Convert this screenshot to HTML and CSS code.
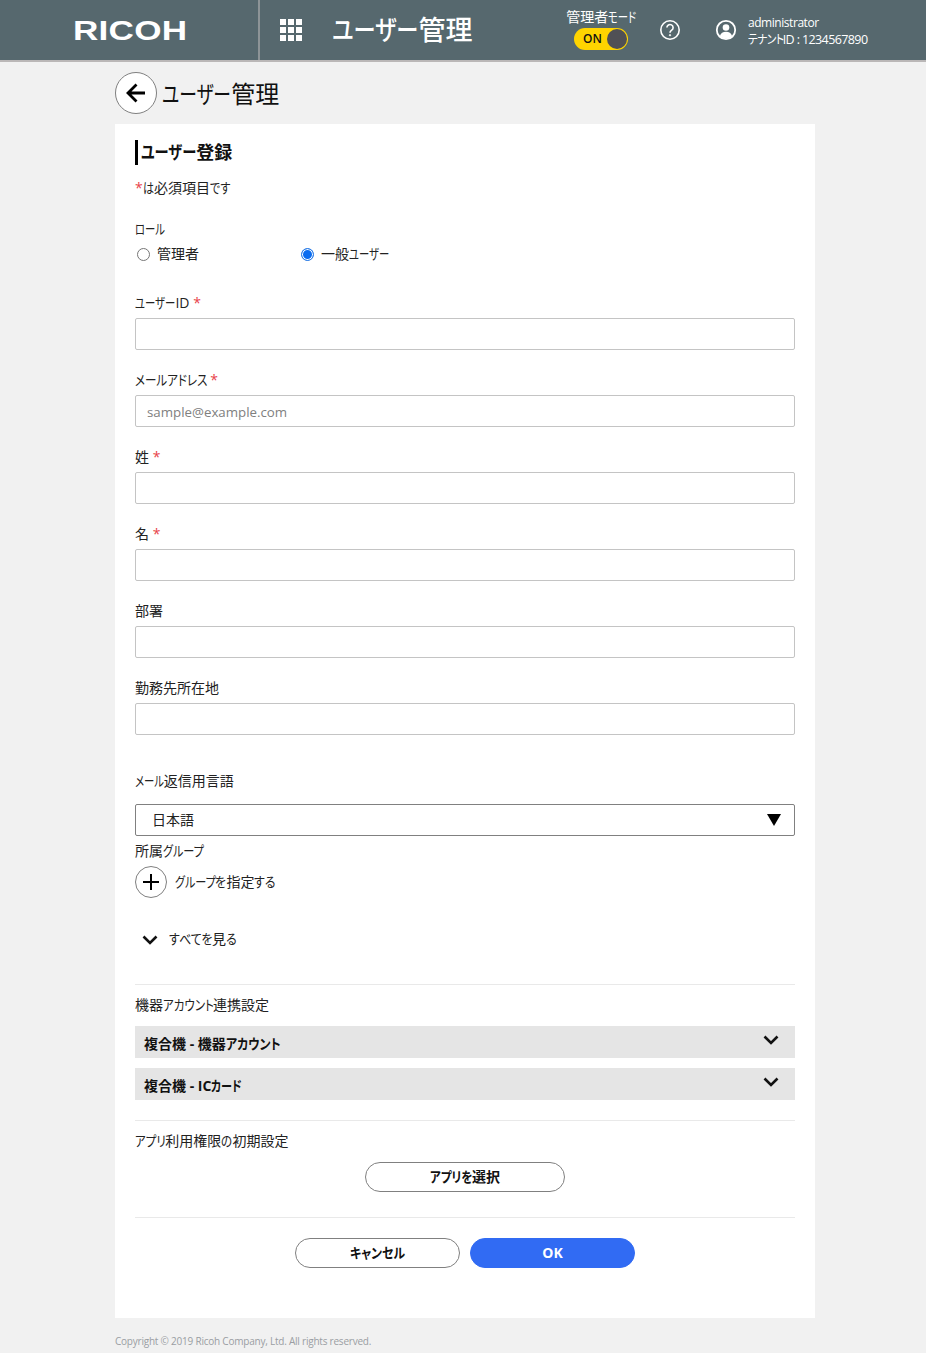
FILE: index.html
```html
<!DOCTYPE html>
<html lang="ja">
<head>
<meta charset="utf-8">
<title>ユーザー管理</title>
<link rel="stylesheet" href="styles.css">
</head>
<body>
<header class="topbar">
  <div class="brand"><span class="logo">RICOH</span></div>
  <div class="appnav">
    <svg class="grid-icon" width="22" height="22" viewBox="0 0 22 22" fill="#fff"><rect width="6" height="6"/><rect x="8" width="6" height="6"/><rect x="16" width="6" height="6"/><rect y="8" width="6" height="6"/><rect x="8" y="8" width="6" height="6"/><rect x="16" y="8" width="6" height="6"/><rect y="16" width="6" height="6"/><rect x="8" y="16" width="6" height="6"/><rect x="16" y="16" width="6" height="6"/></svg>
    <span class="app-title"><span class="sq k n4">ユーザー</span>管理</span>
  </div>
  <div class="mode">
    <span class="mode-label">管理者<span class="sq kk n3">モード</span></span>
    <span class="toggle"><span class="toggle-text">ON</span><span class="knob"></span></span>
  </div>
  <svg class="help" width="22" height="22" viewBox="0 0 22 22" fill="none" stroke="#fff" stroke-width="1.6"><circle cx="11" cy="11" r="9.2"/><path d="M7.9 8.6a3.1 3.1 0 1 1 4.8 2.6c-1 .7-1.7 1.200-1.700 2.500"/><circle cx="11" cy="16.200" r=".7" fill="#fff" stroke-width=".8"/></svg>
  <svg class="user" width="22" height="22" viewBox="0 0 22 22"><circle cx="11" cy="11" r="9.200" fill="none" stroke="#fff" stroke-width="1.800"/><circle cx="11" cy="8.500" r="3.300" fill="#fff"/><path d="M4.800 17.200c.8-3 3.300-4.400 6.200-4.400s5.400 1.400 6.200 4.400a9 9 0 0 1-12.400 0z" fill="#fff"/></svg>
  <div class="account">
    <span class="account-name">administrator</span>
    <span class="account-id"><span class="sq kh n4">テナント</span>ID : 1234567890</span>
  </div>
</header>

<div class="page">
  <div class="page-head">
    <button class="back" type="button" aria-label="戻る">
      <svg width="22" height="22" viewBox="0 0 22 22" fill="none" stroke="#000" stroke-width="2.800"><path d="M20 11H3M11.500 2.500 3 11l8.500 8.500"/></svg>
    </button>
    <h1 class="page-title"><span class="sq kk n4">ユーザー</span>管理</h1>
  </div>

  <main class="card">
    <h2 class="section-title"><span class="sq km n4">ユーザー</span>登録</h2>
    <p class="note"><span class="req">*</span><span class="sq km n1">は</span>必須項目<span class="sq km n2">です</span></p>

    <div class="label role-label"><span class="sq kk n3">ロール</span></div>
    <div class="radios">
      <label class="radio"><span class="radio-mark"></span>管理者</label>
      <label class="radio"><span class="radio-mark on"></span><span>一般<span class="sq kk n4">ユーザー</span></span></label>
    </div>

    <div class="field first">
      <div class="label"><span class="sq kk n4">ユーザー</span>ID <span class="req">*</span></div>
      <div class="input"></div>
    </div>
    <div class="field">
      <div class="label"><span class="sq k n7">メールアドレス</span> <span class="req">*</span></div>
      <div class="input placeholder">sample@example.com</div>
    </div>
    <div class="field">
      <div class="label">姓 <span class="req">*</span></div>
      <div class="input"></div>
    </div>
    <div class="field">
      <div class="label">名 <span class="req">*</span></div>
      <div class="input"></div>
    </div>
    <div class="field">
      <div class="label">部署</div>
      <div class="input"></div>
    </div>
    <div class="field">
      <div class="label">勤務先所在地</div>
      <div class="input"></div>
    </div>

    <div class="label lang-label"><span class="sq kk n3">メール</span>返信用言語</div>
    <div class="select"><span>日本語</span><span class="arrow"></span></div>

    <div class="label group-label">所属<span class="sq km n4">グループ</span></div>
    <div class="add-group">
      <span class="plus"><svg width="16" height="16" viewBox="0 0 16 16" stroke="#000" stroke-width="2"><path d="M8 0v16M0 8h16"/></svg></span>
      <span><span class="sq km n4">グループ</span><span class="sq kh n1">を</span>指定<span class="sq kh n2">する</span></span>
    </div>
    <div class="see-all">
      <svg class="chev" width="16" height="10" viewBox="0 0 16 10" fill="none" stroke="#111" stroke-width="2.600"><path d="M1.500 1.500 8 8l6.500-6.500"/></svg>
      <span><span class="sq kh n4">すべてを</span>見<span class="sq kh n1">る</span></span>
    </div>

    <hr class="rule rule-a">
    <div class="label">機器<span class="sq k n5">アカウント</span>連携設定</div>
    <div class="accordions">
      <div class="accordion"><span class="accordion-text">複合機 - 機器<span class="sq kh n5">アカウント</span></span><svg width="16" height="10" viewBox="0 0 16 10" fill="none" stroke="#111" stroke-width="2.600"><path d="M1.500 1.500 8 8l6.500-6.500"/></svg></div>
      <div class="accordion"><span class="accordion-text">複合機 - IC<span class="sq km n3">カード</span></span><svg width="16" height="10" viewBox="0 0 16 10" fill="none" stroke="#111" stroke-width="2.600"><path d="M1.500 1.500 8 8l6.500-6.500"/></svg></div>
    </div>

    <hr class="rule rule-b">
    <div class="label"><span class="sq k n3">アプリ</span>利用権限<span class="sq k n1">の</span>初期設定</div>
    <div class="app-row"><button class="btn app-btn" type="button"><span class="sq k n4">アプリを</span>選択</button></div>

    <hr class="rule rule-c">
    <div class="actions">
      <button class="btn" type="button"><span class="sq kh n5">キャンセル</span></button>
      <button class="btn primary" type="button">OK</button>
    </div>
  </main>
  <footer class="copyright">Copyright © 2019 Ricoh Company, Ltd. All rights reserved.</footer>
</div>
</body>
</html>
```
FILE: styles.css
```css
* { box-sizing: border-box; }
html, body { margin: 0; padding: 0; }
body {
  background: #f1f1f1;
  color: #222;
  font-family: "Open Sans", "Noto Sans CJK JP", sans-serif;
  font-size: 14px;
  line-height: 20px;
  font-feature-settings: "palt";
  overflow: hidden;
}
button { font: inherit; font-feature-settings: "palt"; cursor: pointer; }

/* Narrow kana: condensed horizontally; --ls is the em saved per character, --n the character count */
.sq {
  display: inline-block;
  white-space: nowrap;
  transform-origin: left center;
  transform: scaleX(calc(1 - var(--ls) / .96));
  margin-right: calc(var(--ls) * var(--n) * -1em);
}
.kh { --ls: .14; }
.k { --ls: .17; }
.km { --ls: .2; }
.kk { --ls: .25; }
.n1 { --n: 1; }
.n2 { --n: 2; }
.n3 { --n: 3; }
.n4 { --n: 4; }
.n5 { --n: 5; }
.n7 { --n: 7; }

.topbar {
  display: flex;
  align-items: center;
  height: 62px;
  background: #56686e;
  border-bottom: 2px solid #bab7b7;
  color: #fff;
}
.brand {
  width: 260px;
  height: 60px;
  padding-left: 73px;
  padding-top: 1px;
  border-right: 2px solid #8d9497;
  display: flex;
  align-items: center;
  flex: none;
}
.logo {
  font-family: "Liberation Sans", sans-serif;
  font-weight: 700;
  font-size: 27px;
  letter-spacing: .2px;
  transform: scaleX(1.3);
  transform-origin: left center;
}
.appnav { display: flex; align-items: center; width: 304px; padding-left: 20px; flex: none; }
.grid-icon { flex: none; }
.app-title { margin-left: 30px; font-size: 27px; line-height: 32px; font-weight: 500; white-space: nowrap; }
.mode { width: 74px; display: flex; flex-direction: column; align-items: center; flex: none; }
.mode-label { font-size: 14px; line-height: 20px; margin-top: -4px; white-space: nowrap; }
.toggle {
  position: relative;
  width: 54px;
  height: 22px;
  margin-top: 1px;
  border-radius: 11px;
  background: #ffd400;
  color: #111;
  display: flex;
  align-items: center;
  padding-left: 9px;
}
.toggle-text { font-size: 12px; font-weight: 600; line-height: 22px; }
.knob {
  position: absolute;
  right: 1px;
  top: 1px;
  width: 20px;
  height: 20px;
  border-radius: 50%;
  background: #505055;
}
.help { margin-left: 21px; flex: none; }
.user { margin-left: 34px; flex: none; }
.account { margin-left: 11px; padding-top: 2px; display: flex; flex-direction: column; white-space: nowrap; }
.account-name { font-size: 12px; line-height: 17px; letter-spacing: -.45px; }
.account-id { font-size: 12.500px; line-height: 17px; letter-spacing: -.6px; }

.page { width: 700px; margin-left: 115px; }
.page-head { display: flex; align-items: center; height: 62px; }
.back {
  width: 42px;
  height: 42px;
  padding: 0;
  border: 1px solid #808080;
  border-radius: 50%;
  background: #fff;
  display: flex;
  align-items: center;
  justify-content: center;
  flex: none;
}
.page-title { margin: 2px 0 0 5px; font-size: 24px; line-height: 32px; font-weight: 400; color: #111; }

.card { background: #fff; padding: 16px 20px 50px; }
.section-title {
  margin: 0 0 13px;
  border-left: 3px solid #000;
  padding-left: 3px;
  height: 25px;
  font-size: 18px;
  line-height: 25px;
  font-weight: 700;
  color: #111;
}
.note { margin: 0 0 21px; }
.req { color: #e8424a; }
.label { line-height: 20px; }
.radios { display: flex; margin-top: 5px; }
.radio { width: 164px; display: flex; align-items: center; padding-left: 2px; }
.radio-mark {
  width: 13px;
  height: 13px;
  margin-right: 7px;
  border: 1px solid #767676;
  border-radius: 50%;
  flex: none;
  background: #fff;
}
.radio-mark.on { border: 1.500px solid #2a7be4; box-shadow: inset 0 0 0 1px #fff; background: #0a6cf0; }

.field { margin-bottom: 20px; }
.field.first { margin-top: 29px; }
.field .label { margin-bottom: 5px; }
.input {
  height: 32px;
  border: 1px solid #c4c4c4;
  border-radius: 2px;
  background: #fff;
  padding: 0 11px;
  line-height: 32px;
}
.placeholder { color: #808080; font-size: 13.300px; }

.lang-label { margin-top: 36px; }
.select {
  margin-top: 13px;
  height: 32px;
  border: 1px solid #808080;
  border-radius: 2px;
  display: flex;
  align-items: center;
  justify-content: space-between;
  padding: 0 13px 0 16px;
}
.arrow {
  width: 0;
  height: 0;
  border-left: 7px solid transparent;
  border-right: 7px solid transparent;
  border-top: 12px solid #000;
}
.group-label { margin-top: 5px; }
.add-group { margin-top: 5px; display: flex; align-items: center; gap: 8px; height: 32px; }
.plus {
  width: 32px;
  height: 32px;
  border: 1px solid #808080;
  border-radius: 50%;
  display: flex;
  align-items: center;
  justify-content: center;
}
.see-all { margin-top: 31px; display: flex; align-items: center; padding-left: 7px; height: 20px; }
.chev { margin-right: 11px; margin-top: 2px; }

.rule { border: 0; height: 1px; background: #e9e9e9; margin: 0 0 10px; }
.rule-a { margin-top: 35px; }
.rule-b { margin-top: 20px; }
.rule-c { margin-top: 25px; margin-bottom: 20px; }

.accordions { margin-top: 11px; display: flex; flex-direction: column; gap: 10px; }
.accordion {
  height: 32px;
  background: #e5e5e5;
  display: flex;
  align-items: center;
  justify-content: space-between;
  padding: 0 16px 0 9px;
  font-weight: 700;
  color: #111;
}
.accordion-text { padding-top: 4px; }
.accordion svg { margin-top: -4px; }

.app-row { margin-top: 11px; display: flex; justify-content: center; }
.btn {
  width: 165px;
  height: 30px;
  padding: 0;
  border: 1px solid #808080;
  border-radius: 15px;
  background: #fff;
  color: #111;
  font-weight: 700;
}
.app-btn { width: 200px; }
.actions { display: flex; justify-content: center; gap: 10px; }
.primary { background: #316bf3; border-color: #316bf3; color: #fff; }
.copyright { margin-top: 13px; font-size: 10px; line-height: 20px; letter-spacing: -.22px; color: #9a9ea3; }
```
